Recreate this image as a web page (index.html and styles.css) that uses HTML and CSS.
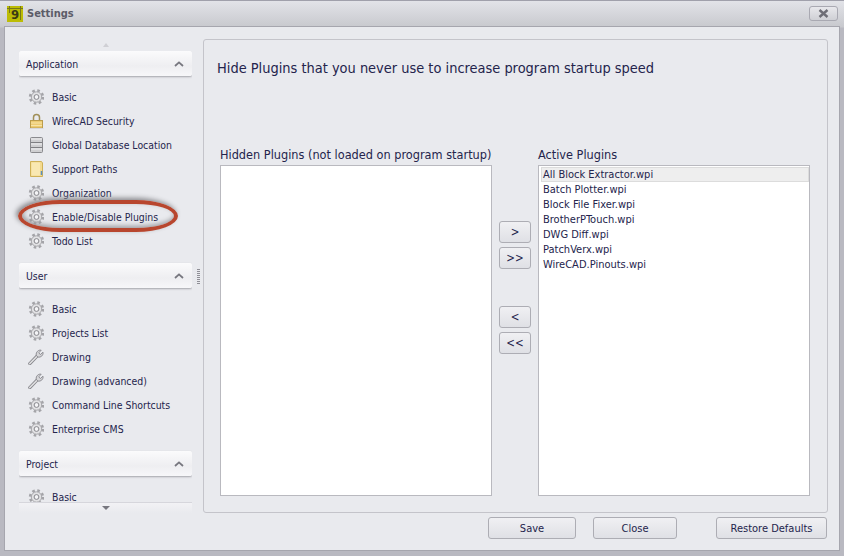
FILE: index.html
```
<!DOCTYPE html>
<html lang="en">
<head>
<meta charset="utf-8">
<title>Settings</title>
<link rel="stylesheet" href="styles.css">
</head>
<body>
<svg class="defs" width="0" height="0" aria-hidden="true">
  <defs>
    <symbol id="gear" viewBox="0 0 16 16">
      <circle cx="8.5" cy="8" r="6.3" fill="none" stroke="#a4a4a8" stroke-width="2.8" stroke-dasharray="2.5 2.45"/>
      <circle cx="8.5" cy="8" r="5.2" fill="#e2e2e4" stroke="#a8a8ac" stroke-width="1"/>
      <circle cx="8.5" cy="8" r="2.4" fill="#f4f4f6" stroke="#87878c" stroke-width="1"/>
    </symbol>
    <symbol id="wrench" viewBox="0 0 16 16">
      <path d="M1.8 14.6 L9 7.2" stroke="#87878c" stroke-width="3.2" stroke-linecap="round" fill="none"/>
      <path d="M1.8 14.6 L9 7.2" stroke="#e2e2e4" stroke-width="1.5" stroke-linecap="round" fill="none"/>
      <path d="M8.2 6.2 C7.8 3 10.4 .6 13.2 1.2 L10.8 3.8 L12.3 5.6 L15 3.2 C15.6 6 13 8.8 9.8 8 Z" fill="#d6d6d9" stroke="#87878c" stroke-width=".9"/>
    </symbol>
  </defs>
</svg>
<div class="window">
  <header class="titlebar">
    <span class="logo"><svg class="logo-lines" viewBox="0 0 16 16" aria-hidden="true"><path d="M0 2.5H16M2.5 0V7M13.5 0V14" stroke="#77771a" stroke-width="1" fill="none"/></svg><span class="logo-nine">9</span></span>
    <span class="title">Settings</span>
    <button class="close-x" type="button" aria-label="Close"><svg viewBox="0 0 11 9" aria-hidden="true"><path d="M1.5 1 L9.5 8 M9.5 1 L1.5 8" stroke="#6e6e76" stroke-width="2.4" fill="none"/></svg></button>
  </header>
  <div class="client">
    <div class="main">
      <nav class="sidebar">
        <div class="scroll-strip scroll-up"><span class="arrow-up"></span></div>
        <div class="groups">
          <section class="group">
            <div class="group-head"><span>Application</span><svg class="chev" viewBox="0 0 10 6" aria-hidden="true"><path d="M1 5 L5 1.4 L9 5" fill="none" stroke="#77777f" stroke-width="1.8"/></svg></div>
            <ul class="items">
              <li><svg class="ico"><use href="#gear"/></svg>Basic</li>
              <li><svg class="ico" viewBox="0 0 16 16"><path d="M5.5 8V4.5a3 3 0 0 1 6 0V8" fill="none" stroke="#a08f58" stroke-width="1.5"/><rect x="2.5" y="7.5" width="12" height="7.5" fill="#edcb72" stroke="#bb9c4c"/><path d="M3 10h11M3 12.5h11" stroke="#f7e4a8"/><path d="M1.5 15.5h14" stroke="#d6d6da"/></svg>WireCAD Security</li>
              <li><svg class="ico" viewBox="0 0 16 16"><rect x="2.5" y=".5" width="12" height="15" rx="1" fill="#cfcfd1" stroke="#8a8a8e"/><path d="M3 5.5h11M3 10.5h11" stroke="#7f7f83"/><path d="M3 2h11M3 7h11M3 12h11" stroke="#f0f0f2"/></svg>Global Database Location</li>
              <li><svg class="ico" viewBox="0 0 16 16"><path d="M2.5 .5H13.5L14.5 2V15.5H2.5Z" fill="#f4da8f" stroke="#cfb158"/><path d="M3.5 1.5H12V14.5H3.5Z" fill="#f9e8b2"/><path d="M13.5 10v4" stroke="#5a8fc0" stroke-width="1.5"/></svg>Support Paths</li>
              <li><svg class="ico"><use href="#gear"/></svg>Organization</li>
              <li><svg class="ico"><use href="#gear"/></svg>Enable/Disable Plugins</li>
              <li><svg class="ico"><use href="#gear"/></svg>Todo List</li>
            </ul>
          </section>
          <section class="group">
            <div class="group-head"><span>User</span><svg class="chev" viewBox="0 0 10 6" aria-hidden="true"><path d="M1 5 L5 1.4 L9 5" fill="none" stroke="#77777f" stroke-width="1.8"/></svg></div>
            <ul class="items">
              <li><svg class="ico"><use href="#gear"/></svg>Basic</li>
              <li><svg class="ico"><use href="#gear"/></svg>Projects List</li>
              <li><svg class="ico"><use href="#wrench"/></svg>Drawing</li>
              <li><svg class="ico"><use href="#wrench"/></svg>Drawing (advanced)</li>
              <li><svg class="ico"><use href="#gear"/></svg>Command Line Shortcuts</li>
              <li><svg class="ico"><use href="#gear"/></svg>Enterprise CMS</li>
            </ul>
          </section>
          <section class="group">
            <div class="group-head"><span>Project</span><svg class="chev" viewBox="0 0 10 6" aria-hidden="true"><path d="M1 5 L5 1.4 L9 5" fill="none" stroke="#77777f" stroke-width="1.8"/></svg></div>
            <ul class="items">
              <li><svg class="ico"><use href="#gear"/></svg>Basic</li>
            </ul>
          </section>
        </div>
        <div class="scroll-strip scroll-down"><span class="arrow-down"></span></div>
        <span class="highlight"></span>
      </nav>
      <div class="splitter"><span class="grip"></span></div>
      <section class="panel">
        <h1 class="heading">Hide Plugins that you never use to increase program startup speed</h1>
        <div class="lists">
          <div class="col">
            <label class="col-label">Hidden Plugins (not loaded on program startup)</label>
            <div class="listbox"></div>
          </div>
          <div class="movers">
            <div class="mover-group">
              <button class="btn mover" type="button">&gt;</button>
              <button class="btn mover" type="button">&gt;&gt;</button>
            </div>
            <div class="mover-group">
              <button class="btn mover" type="button">&lt;</button>
              <button class="btn mover" type="button">&lt;&lt;</button>
            </div>
          </div>
          <div class="col">
            <label class="col-label">Active Plugins</label>
            <ul class="listbox">
              <li class="selected">All Block Extractor.wpi</li>
              <li>Batch Plotter.wpi</li>
              <li>Block File Fixer.wpi</li>
              <li>BrotherPTouch.wpi</li>
              <li>DWG Diff.wpi</li>
              <li>PatchVerx.wpi</li>
              <li>WireCAD.Pinouts.wpi</li>
            </ul>
          </div>
        </div>
      </section>
    </div>
    <footer class="footer">
      <button class="btn btn-save" type="button">Save</button>
      <button class="btn btn-close" type="button">Close</button>
      <button class="btn btn-restore" type="button">Restore Defaults</button>
    </footer>
  </div>
</div>
</body>
</html>
```
FILE: styles.css
```
* { box-sizing: border-box; }
html, body { margin: 0; height: 100%; }
body {
  font-family: "DejaVu Sans Condensed", "DejaVu Sans", sans-serif;
  font-size: 11px;
  color: #24244c;
  overflow: hidden;
}
.defs { position: absolute; }
.window {
  width: 844px;
  height: 556px;
  display: flex;
  flex-direction: column;
  background: linear-gradient(#e2e3e8 0, #c8c9ce 26px, #b9b9c1 27px);
  border-top: 1px solid #a0a0ab;
}
.titlebar {
  height: 25px;
  flex: none;
  display: flex;
  align-items: center;
  padding: 0 6px 0 7px;
}
.logo {
  position: relative;
  width: 16px;
  height: 16px;
  background: #bcbc05;
  display: flex;
  align-items: center;
  justify-content: center;
  flex: none;
}
.logo-lines { position: absolute; inset: 0; width: 16px; height: 16px; }
.logo-nine { position: relative; top: 1px; font-weight: 700; font-size: 13px; color: #3a3a14; line-height: 16px; }
.title {
  margin-left: 4px;
  font-weight: 700;
  font-size: 11px;
  color: #5c5c68;
  flex: 1;
}
.close-x {
  width: 29px;
  height: 15px;
  padding: 0;
  border: 1px solid #a9a9b2;
  border-radius: 3px;
  background: linear-gradient(#e8e8ec, #cfd0d5);
  display: flex;
  align-items: center;
  justify-content: center;
}
.close-x svg { width: 11px; height: 9px; }
.client {
  flex: 1;
  margin: 0 4px 5px;
  background: #e9eaee;
  border: 1px solid #a6a6ae;
  padding: 12px 11px 11px 14px;
  display: flex;
  flex-direction: column;
  min-height: 0;
}
.main { flex: 1; display: flex; min-height: 0; }
.sidebar {
  position: relative;
  width: 173px;
  flex: none;
  display: flex;
  flex-direction: column;
  font-size: 10.4px;
}
.scroll-strip {
  flex: none;
  display: flex;
  justify-content: center;
  align-items: center;
}
.scroll-up { height: 12px; }
.scroll-down {
  height: 11px;
  border-top: 1px solid #d6d6dc;
  background: linear-gradient(#f2f2f5, #e9eaee);
}
.arrow-up {
  border-left: 3px solid transparent;
  border-right: 3px solid transparent;
  border-bottom: 4px solid #cfcfd4;
}
.arrow-down {
  border-left: 4px solid transparent;
  border-right: 4px solid transparent;
  border-top: 4px solid #77777f;
}
.groups { flex: 1; overflow: hidden; min-height: 0; }
.group { margin-bottom: 10px; }
.group-head {
  height: 25px;
  display: flex;
  align-items: center;
  justify-content: space-between;
  padding: 0 8px 0 7px;
  background: linear-gradient(#fbfbfc 0, #eeeef1 60%, #f7f7f9 100%);
  border-radius: 2px;
  box-shadow: 0 1px 2px #a4a4aa;
  margin: 0 0 9px;
}
.chev { width: 10px; height: 6px; }
.items { list-style: none; margin: 0; padding: 0; }
.items li {
  height: 24px;
  display: flex;
  align-items: center;
  gap: 8px;
  padding-left: 9px;
}
.ico { width: 16px; height: 16px; flex: none; }
.highlight {
  position: absolute;
  left: -1px;
  top: 161px;
  width: 160px;
  height: 32px;
  border: 4px solid #b8462e;
  border-radius: 42px / 16px;
  box-shadow: -2px -2px 5px #88888c, inset 1px -2px 5px #9a9a9e;
  pointer-events: none;
}
.splitter {
  width: 11px;
  flex: none;
  display: flex;
  align-items: center;
  justify-content: center;
  padding-left: 2px;
}
.grip {
  width: 3px;
  height: 15px;
  background: repeating-linear-gradient(#8f8f96 0 1px, #e9eaee 1px 2px);
}
.panel {
  flex: 1;
  min-width: 0;
  border: 1px solid #c4c4ca;
  border-radius: 3px;
  padding: 19px 16px 16px 16px;
  display: flex;
  flex-direction: column;
}
.heading {
  margin: 0 0 0 -3px;
  font-weight: 400;
  font-size: 14.45px;
  line-height: 18px;
  color: #24244c;
}
.lists {
  flex: 1;
  min-height: 0;
  margin-top: 68px;
  display: flex;
}
.col { width: 272px; flex: none; display: flex; flex-direction: column; }
.col-label { font-size: 12.6px; line-height: 16px; height: 20px; padding-top: 2px; white-space: nowrap; }
.listbox {
  flex: 1;
  margin: 0;
  padding: 1px 0 0 2px;
  list-style: none;
  background: #fff;
  border: 1px solid #b9b9bf;
}
.listbox li { height: 15px; line-height: 15px; padding-left: 2px; }
.listbox li.selected { background: #eeeeee; box-shadow: inset 0 0 0 1px #dcdcdc; }
.movers {
  width: 46px;
  flex: none;
  display: flex;
  flex-direction: column;
  align-items: center;
  gap: 37px;
  padding-top: 76px;
}
.mover-group { display: flex; flex-direction: column; gap: 4px; }
.btn {
  font: inherit;
  color: #24244c;
  border: 1px solid #adadb4;
  border-radius: 3px;
  background: linear-gradient(#f0f0f3, #dfe0e5);
  padding: 0;
  height: 22px;
}
.mover { width: 32px; font-size: 11.5px; }
.footer {
  flex: none;
  margin-top: 4px;
  display: flex;
  justify-content: flex-end;
  padding-right: 1px;
}
.btn-save { width: 88px; margin-right: 17px; }
.btn-close { width: 84px; margin-right: 39px; }
.btn-restore { width: 111px; }
```
